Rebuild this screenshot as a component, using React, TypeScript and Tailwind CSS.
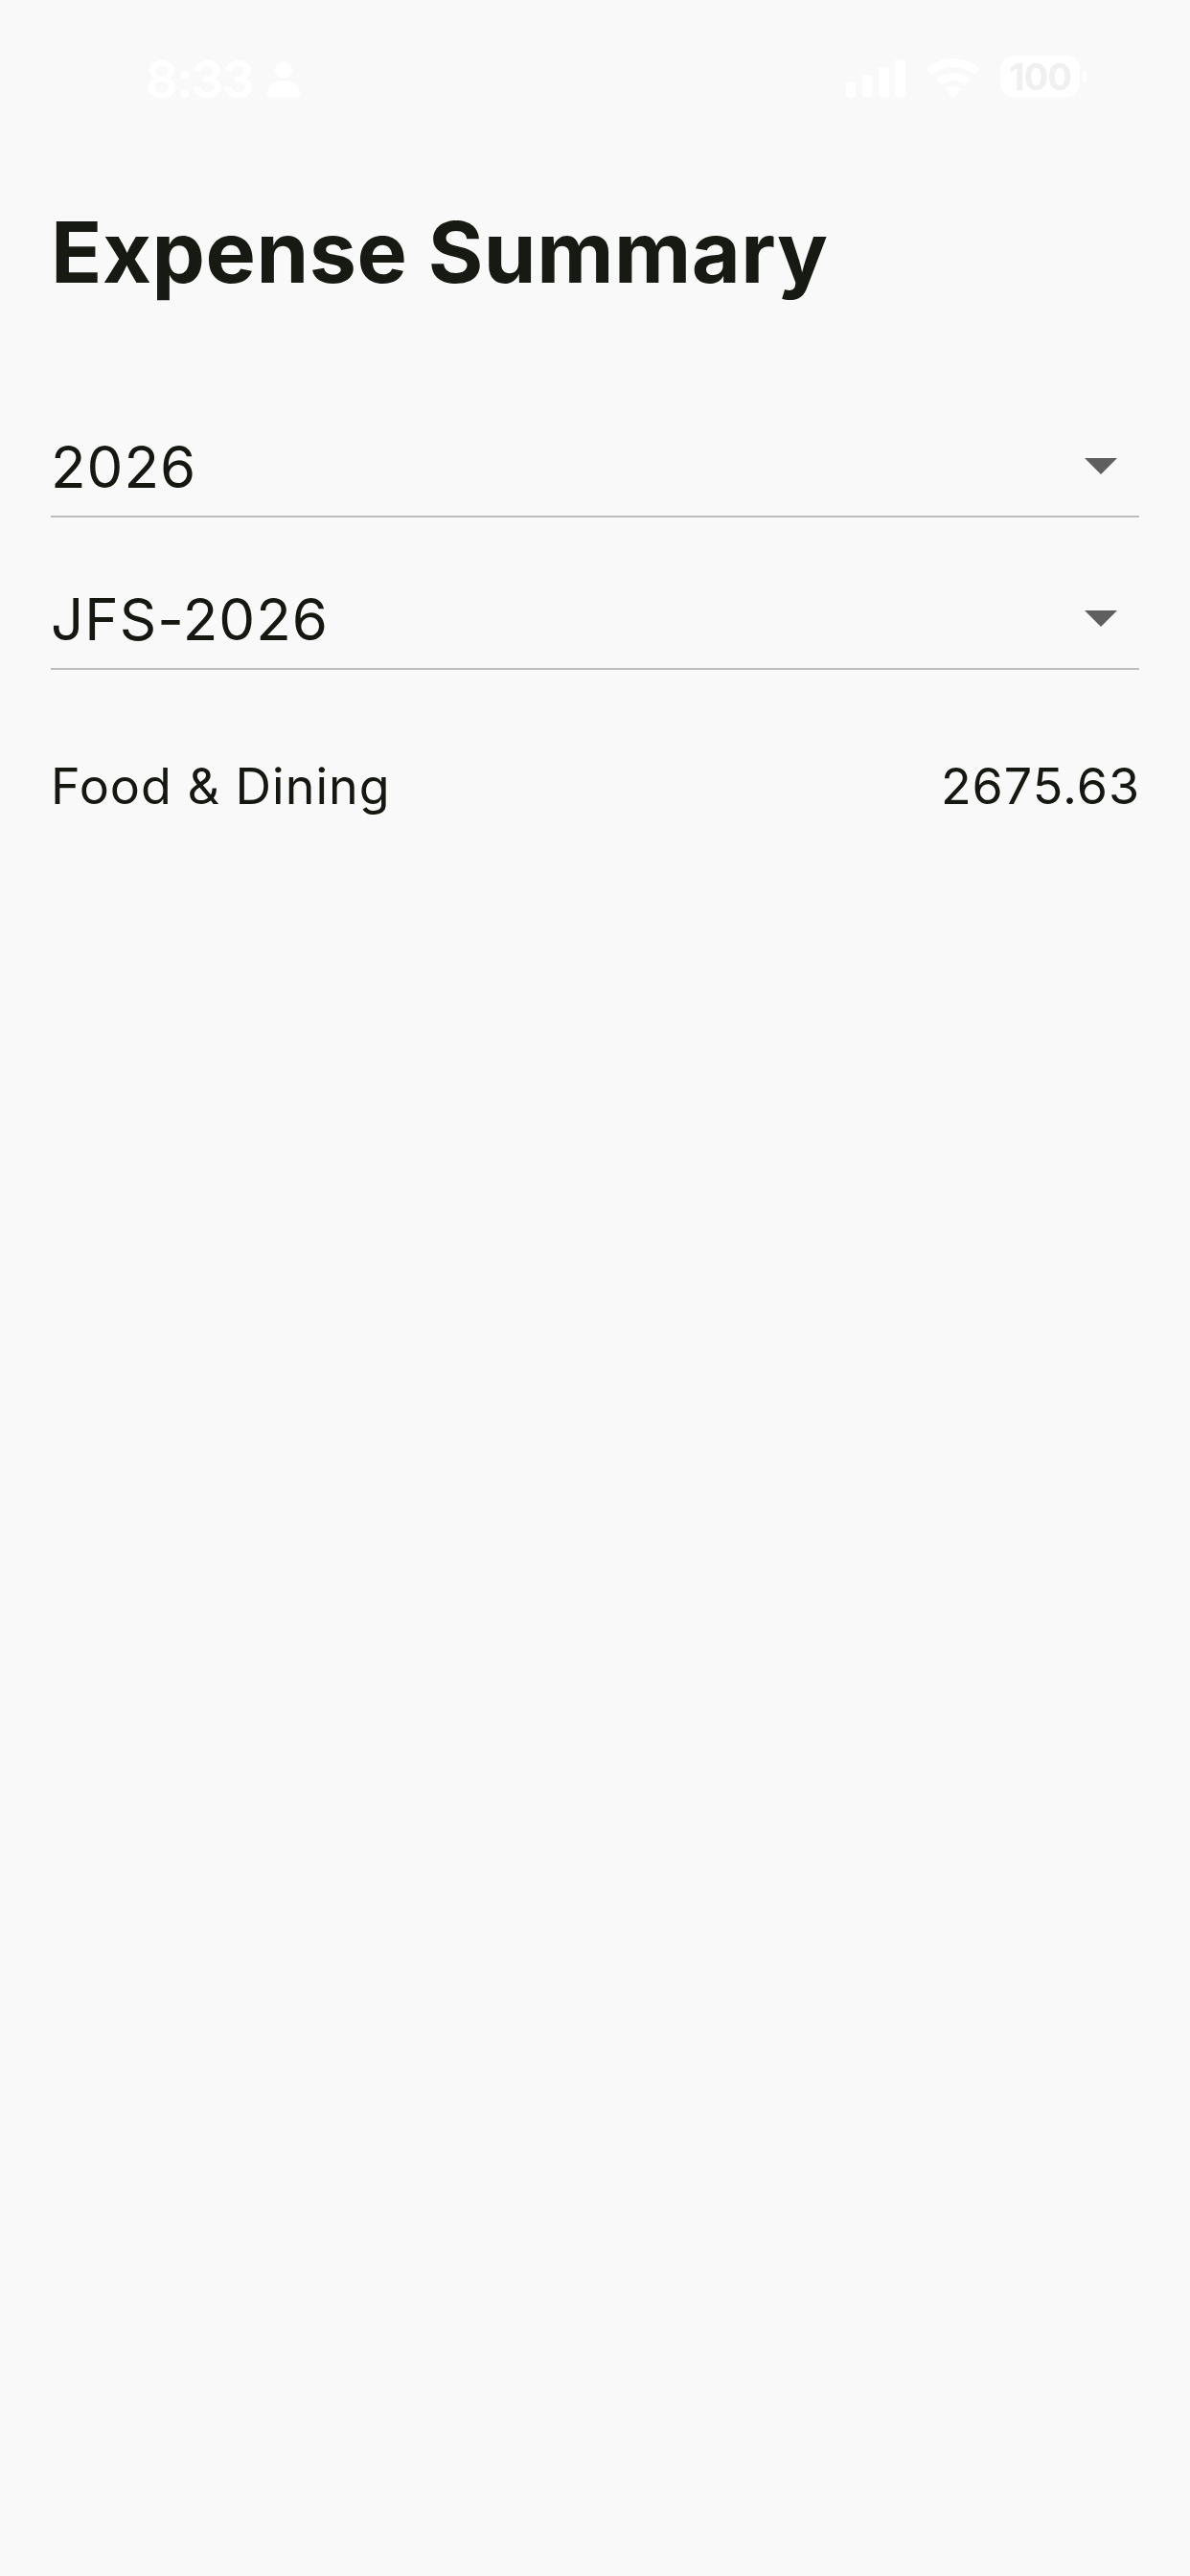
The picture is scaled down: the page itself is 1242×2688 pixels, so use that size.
import React from 'react';

const font = { inter: "font-['Inter',sans-serif]" };

function StatusBar() {
  return (
    <div className="flex h-[130px] items-start justify-between pl-[152px] pr-[108px] pt-[58px] font-['Inter',sans-serif] text-white">
      <div className="flex items-center gap-[14px]">
        <span className="text-[53px] font-semibold leading-[50px] tracking-[-1.5px]">8:33</span>
        <svg width="36" height="38" viewBox="0 0 36 38" fill="white">
          <circle cx="18" cy="9" r="9" />
          <path d="M1 33c0-9 8-12 17-12s17 3 17 12c0 3-1 4-4 4H5c-3 0-4-1-4-4z" />
        </svg>
      </div>
      <div className="flex items-start gap-[20px]">
        <svg className="mt-[4px]" width="64" height="40" viewBox="0 0 64 40" fill="white">
          <rect x="1" y="23" width="10" height="16" rx="2.5" />
          <rect x="18" y="16" width="10" height="23" rx="2.5" />
          <rect x="35" y="8" width="11" height="31" rx="2.5" />
          <rect x="52" y="0" width="11" height="39" rx="2.5" />
        </svg>
        <svg className="mt-[3px]" width="58" height="42" viewBox="0 0 58 42" fill="white">
          <path d="M29 0c11 0 21 4 28 11l-6 6c-6-5-14-8-22-8S13 12 7 17l-6-6C8 4 18 0 29 0z" />
          <path d="M29 15c7 0 13 2 18 7l-6 6c-3-3-7-5-12-5s-9 2-12 5l-6-6c5-5 11-7 18-7z" />
          <path d="M29 29c3 0 6 1 8 3l-8 9-8-9c2-2 5-3 8-3z" />
        </svg>
        <div className="flex items-center gap-[3px]">
          <div className="flex h-[43px] w-[83px] items-center justify-center rounded-[14px] bg-white text-[38px] font-bold leading-none tracking-[-1px] text-[#f0f0f0]">
            100
          </div>
          <div className="h-[12px] w-[4px] rounded-r-full bg-white" />
        </div>
      </div>
    </div>
  );
}

function Dropdown({ value }: { value: string }) {
  return (
    <div className="flex h-[105px] items-center justify-between border-b-2 border-[#bdbdbd] pr-[23px]">
      <span className={`${font.inter} text-[60px] leading-[70px] tracking-[1px] text-[#141810]`}>{value}</span>
      <div className="h-0 w-0 border-x-[17px] border-t-[17px] border-x-transparent border-t-[#5f5f5f]" />
    </div>
  );
}

export default function App() {
  return (
    <div className="h-[2688px] w-[1242px] overflow-hidden bg-[#f9f9f9]">
      <StatusBar />
      <div className="pl-[53px] pr-[53px]">
        <h1 className={`pt-[83px] ${font.inter} text-[88px] font-bold leading-[100px] tracking-[0.5px] text-[#171a13]`}>
          Expense Summary
        </h1>
        <div className="mt-[122px] flex flex-col gap-[54px]">
          <Dropdown value="2026" />
          <Dropdown value="JFS-2026" />
        </div>
        <div className={`mt-[92px] flex items-center justify-between ${font.inter} text-[52px] leading-[60px] tracking-[1px] text-[#141810]`}>
          <span>Food &amp; Dining</span>
          <span className="-mr-[1px]">2675.63</span>
        </div>
      </div>
    </div>
  );
}
